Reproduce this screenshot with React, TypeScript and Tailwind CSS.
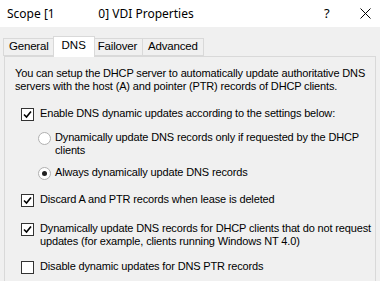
import type { ReactNode } from "react";

function CheckBox({ checked }: { checked?: boolean }) {
  return (
    <span className="flex h-[13px] w-[13px] shrink-0 items-center justify-center border border-[#333] bg-white">
      {checked && (
        <svg width="9" height="9" viewBox="0 0 9 9">
          <path d="M1 4.5 L3.5 7 L8 1.5" fill="none" stroke="#000" strokeWidth="1.6" />
        </svg>
      )}
    </span>
  );
}

function Radio({ checked }: { checked?: boolean }) {
  return (
    <span className="flex h-[13px] w-[13px] shrink-0 items-center justify-center rounded-full border border-[#b0b0b0] bg-white">
      {checked && <span className="h-[5px] w-[5px] rounded-full bg-[#222]" />}
    </span>
  );
}

function Option({ control, children, indent }: { control: ReactNode; children: ReactNode; indent?: boolean }) {
  return (
    <div className={indent ? "flex gap-[4px] pl-[33px]" : "flex gap-[6px] pl-[16px]"}>
      <div className="pt-[1px]">{control}</div>
      <div className="whitespace-nowrap leading-[13px]">{children}</div>
    </div>
  );
}

const tabs = ["General", "DNS", "Failover", "Advanced"];

export default function App() {
  return (
    <div
      className="h-[281px] w-[380px] overflow-hidden bg-[#f0f0f0] text-[11px] tracking-[-0.15px] text-black"
      style={{ fontFamily: '"Liberation Sans", Arial, sans-serif' }}
    >
      <div className="flex h-[27px] items-center bg-white pl-[7px] text-[12px] tracking-normal" style={{ fontFamily: '"Noto Sans", sans-serif' }}>
        <span className="flex-1">Scope [1&nbsp;&nbsp;&nbsp;&nbsp;&nbsp;&nbsp;&nbsp;&nbsp;&nbsp;&nbsp;&nbsp;&nbsp;&nbsp;&nbsp;0] VDI Properties</span>
        <span className="w-[36px] text-[13px]">?</span>
        <svg width="11" height="11" viewBox="0 0 11 11" className="mr-[9px]">
          <path d="M0.5 0.5 L10.5 10.5 M10.5 0.5 L0.5 10.5" stroke="#000" strokeWidth="1" />
        </svg>
      </div>
      <div className="px-[4px] pt-[9px]">
        <div className="flex h-[20px] items-end">
          {tabs.map((t) =>
            t === "DNS" ? (
              <div key={t} className="relative z-10 -mb-px -mx-[2px] flex h-[21px] items-center border border-b-0 border-[#d9d9d9] bg-white px-[8px] pb-[2px] text-[11.5px] tracking-normal">
                {t}
              </div>
            ) : (
              <div key={t} className="-ml-px flex h-[18px] items-center border border-[#d9d9d9] bg-[#f0f0f0] px-[5px] text-[11.5px] tracking-[-0.2px]">
                {t}
              </div>
            )
          )}
        </div>
        <div className="h-[240px] border border-[#d9d9d9] pt-[10px]">
          <p className="whitespace-nowrap pl-[10px] leading-[13px]">
            You can setup the DHCP server to automatically update authoritative DNS
            <br />
            servers with the host (A) and pointer (PTR) records of DHCP clients.
          </p>
          <div className="mt-[14px] flex flex-col">
            <Option control={<CheckBox checked />}>Enable DNS dynamic updates according to the settings below:</Option>
            <div className="mt-[10px]">
              <Option indent control={<Radio />}>
                Dynamically update DNS records only if requested by the DHCP
                <br />
                clients
              </Option>
            </div>
            <div className="mt-[9px]">
              <Option indent control={<Radio checked />}>Always dynamically update DNS records</Option>
            </div>
            <div className="mt-[13px]">
              <Option control={<CheckBox checked />}>Discard A and PTR records when lease is deleted</Option>
            </div>
            <div className="mt-[15px]">
              <Option control={<CheckBox checked />}>
                Dynamically update DNS records for DHCP clients that do not request
                <br />
                updates (for example, clients running Windows NT 4.0)
              </Option>
            </div>
            <div className="mt-[12px]">
              <Option control={<CheckBox />}>Disable dynamic updates for DNS PTR records</Option>
            </div>
          </div>
        </div>
      </div>
    </div>
  );
}
